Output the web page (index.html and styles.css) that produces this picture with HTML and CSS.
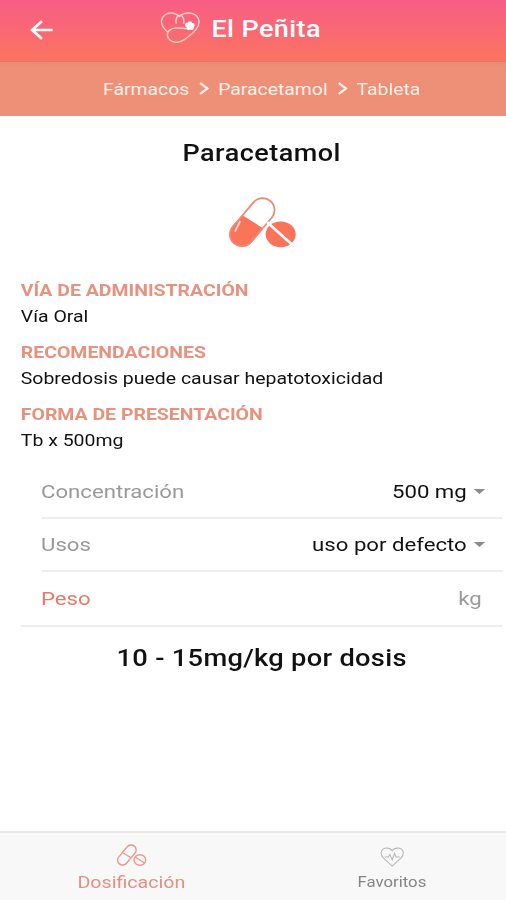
FILE: index.html
```
<!doctype html>
<html lang="es">
  <head>
    <meta charset="utf-8">
    <title>El Peñita</title>
    <link rel="stylesheet" href="styles.css">
  </head>
  <body>
    <div class="screen">
      <header class="toolbar">
        <svg class="back" viewBox="0 0 23 20" preserveAspectRatio="none">
          <path d="M22.500 10H2M11.800 1.200L2 10l9.800 8.800"/>
        </svg>
        <svg class="logo" viewBox="0 0 39 31" preserveAspectRatio="none">
          <path d="M7.300 20.500C3 16.500.8 13 .8 9.500 1 4 5.500 1 10.500 1c3.500 0 6 1.500 8 3.500C21 2 24 1 28 1c6 0 10.200 4 10.200 9 0 6-5 10.500-11 15-3.500 3-7.500 5.500-12 5.300C10 30 6.500 26.500 6.700 22.500c.4-4 4.300-6.200 8.800-6.500 4-.3 8 1 12 .5"/>
          <path d="M15.500 11.500c-.6-3-.2-5 1-6.500M21.500 4.500c1.500 1.500 1.800 4 1.500 7M16.500 5c.5-2 4.500-2 5-.5"/>
          <g class="flower">
            <circle cx="26.500" cy="13" r="2.300"/>
            <circle cx="29" cy="11.500" r="2.300"/>
            <circle cx="31.600" cy="13.300" r="2.300"/>
            <circle cx="28" cy="15.700" r="2.200"/>
            <circle cx="30.800" cy="15.800" r="2.200"/>
            <circle cx="29" cy="13.700" r="2"/>
          </g>
        </svg>
        <h1>El Peñita</h1>
      </header>

      <nav class="breadcrumb">
        <span>Fármacos</span>
        <svg class="chevron" viewBox="0 0 9 13" preserveAspectRatio="none"><path d="M1.200 1l6.300 5.500-6.300 5.500"/></svg>
        <span>Paracetamol</span>
        <svg class="chevron" viewBox="0 0 9 13" preserveAspectRatio="none"><path d="M1.200 1l6.300 5.500-6.300 5.500"/></svg>
        <span>Tableta</span>
      </nav>

      <main>
        <h2>Paracetamol</h2>
        <svg class="pills" viewBox="0 0 68 52" preserveAspectRatio="none">
          <path class="fill" d="M14 18.500L3.500 29.100a12.700 12.700 0 0 0 19.400 16.400L34.500 31.500z"/>
          <path class="gap" d="M12.500 17.200L37 28.500V20L20 9z"/>
          <rect class="line" x="11.600" y="-2.600" width="23.800" height="55.600" rx="11.900" transform="rotate(40.300 23.500 25.200)"/>
          <path class="shine" d="M11.200 24.500L6.500 34"/>
          <ellipse class="fill" cx="51.800" cy="37.300" rx="15" ry="12.900"/>
          <path class="cut" d="M38.300 25.200l27 24.300"/>
        </svg>

        <dl>
          <dt>VÍA DE ADMINISTRACIÓN</dt>
          <dd>Vía Oral</dd>
          <dt>RECOMENDACIONES</dt>
          <dd>Sobredosis puede causar hepatotoxicidad</dd>
          <dt>FORMA DE PRESENTACIÓN</dt>
          <dd>Tb x 500mg</dd>
        </dl>

        <div class="form">
          <div class="row">
            <span class="label">Concentración</span>
            <span class="value">500 mg</span>
            <i class="arrow"></i>
          </div>
          <div class="row">
            <span class="label">Usos</span>
            <span class="value">uso por defecto</span>
            <i class="arrow"></i>
          </div>
          <div class="row last">
            <span class="label active">Peso</span>
            <span class="unit">kg</span>
          </div>
        </div>

        <p class="dose">10 - 15mg/kg por dosis</p>
      </main>

      <footer class="tabs">
        <div class="tab selected">
          <svg viewBox="0 0 30 23" preserveAspectRatio="none">
            <rect x="5.200" y="-.6" width="10" height="23.200" rx="5" transform="rotate(40 10.200 11)"/>
            <path d="M6.500 9l7.500 4.500"/>
            <ellipse cx="23.200" cy="16" rx="5.900" ry="5.200"/>
            <path d="M18.500 13l9.200 6"/>
          </svg>
          <span>Dosificación</span>
        </div>
        <div class="tab">
          <svg viewBox="0 0 26 21" preserveAspectRatio="none">
            <path d="M13 20L3.500 11.500C-1 7 1.500 1 7 1c2.800 0 4.800 1 6 3 1.200-2 3.200-3 6-3 5.500 0 8 6 3.500 10.500z"/>
            <path d="M5 10.500h4l1.500-2.500 2.500 5.500 2.500-7 1.500 4h4"/>
          </svg>
          <span>Favoritos</span>
        </div>
      </footer>
    </div>
  </body>
</html>
```

FILE: styles.css
```
body {
  margin: 0;
  overflow: hidden;
  background: #fff;
}
/* wide type: everything is laid out at 438px and widened to fill 506px */
.screen {
  display: flex;
  flex-direction: column;
  width: 438px;
  height: 900px;
  transform: scaleX(1.1553);
  transform-origin: 0 0;
  font-family: Roboto, sans-serif;
  color: #111;
}
h1, h2, p, dl, dd {
  margin: 0;
}
svg {
  display: block;
  flex: none;
  fill: none;
}
.toolbar {
  display: flex;
  align-items: center;
  box-sizing: border-box;
  height: 62px;
  padding: 0 0 6px 26px;
  background: linear-gradient(#f95d87, #fa7460);
  border-bottom: 1px solid #dd7766;
  color: #fff;
}
.back {
  width: 20px;
  height: 20px;
  margin-top: 4px;
  stroke: #fff;
  stroke-width: 2.6;
}
.logo {
  width: 34px;
  height: 31px;
  margin-left: 93px;
  stroke: #ffd0c4;
  stroke-width: 1.4;
}
.flower {
  fill: #fff;
  stroke: none;
}
h1 {
  margin: 3px 0 0 10px;
  font-size: 23.4px;
  font-weight: 500;
  letter-spacing: .35px;
}
.breadcrumb {
  display: flex;
  align-items: center;
  justify-content: center;
  box-sizing: border-box;
  height: 54px;
  padding: 0 0 1px 15px;
  background: linear-gradient(#e88a75, #ee8f78 6px);
  color: #fff0e8;
  font-size: 16.8px;
}
.chevron {
  width: 9px;
  height: 13px;
  margin: 0 8px;
  stroke: #fff0e8;
  stroke-width: 2.2;
}
main {
  flex: 1;
}
h2 {
  padding-left: 15px;
  margin-top: 23px;
  font-size: 23.4px;
  line-height: 28px;
  font-weight: 500;
  letter-spacing: .4px;
  text-align: center;
}
.pills {
  width: 59px;
  height: 52px;
  margin: 30px 0 0 198px;
}
.fill {
  fill: #fa7459;
}
.gap {
  fill: #fff;
}
.line {
  stroke: #f08a76;
  stroke-width: 1.8;
}
.shine {
  stroke: #ffd9cf;
  stroke-width: 1.8;
  stroke-linecap: round;
}
.cut {
  stroke: #fff;
  stroke-width: 2.6;
}
dl {
  margin: 28px 0 0 18px;
}
dt {
  color: #e6927e;
  font-size: 16.85px;
  line-height: 26px;
  font-weight: 700;
}
dd {
  margin-bottom: 10px;
  font-size: 16.85px;
  line-height: 26px;
}
.form {
  margin: 0 3px 0 18px;
  padding-top: 3px;
}
.row {
  display: flex;
  align-items: center;
  box-sizing: border-box;
  height: 53px;
  margin-left: 17.5px;
  padding-right: 15px;
  border-bottom: 2px solid #eee;
  font-size: 19.2px;
}
.row.last {
  height: 55px;
  margin-left: 0;
  padding: 0 18px 0 17.5px;
}
.label {
  flex: 1;
  color: #999;
}
.label.active {
  color: #e37b6d;
}
.unit {
  color: #999;
}
.arrow {
  margin-left: 6px;
  border: 5px solid transparent;
  border-top-color: #8c8c8c;
  border-bottom: 0;
}
.dose {
  padding-left: 15px;
  margin-top: 16px;
  font-size: 23.6px;
  line-height: 30px;
  font-weight: 500;
  letter-spacing: .25px;
  text-align: center;
}
.tabs {
  display: flex;
  box-sizing: border-box;
  height: 69px;
  border-top: 2px solid #e9e9e9;
  background: #f8f8f8;
}
.tab {
  display: flex;
  flex-direction: column;
  align-items: center;
  flex: 1;
  padding: 14px 0 0 28px;
  color: #858585;
  font-size: 14.5px;
}
.tab svg {
  width: 21px;
  height: 20px;
  stroke: #b5b5b5;
  stroke-width: 1.1;
}
.tab span {
  margin-top: 7px;
}
.tab.selected {
  padding: 11px 0 0 15px;
  color: #e58f82;
  font-size: 17px;
}
.tab.selected svg {
  width: 26px;
  height: 23px;
  stroke: #e9988a;
  stroke-width: 1.4;
}
.tab.selected span {
  margin-top: 5px;
}
```
